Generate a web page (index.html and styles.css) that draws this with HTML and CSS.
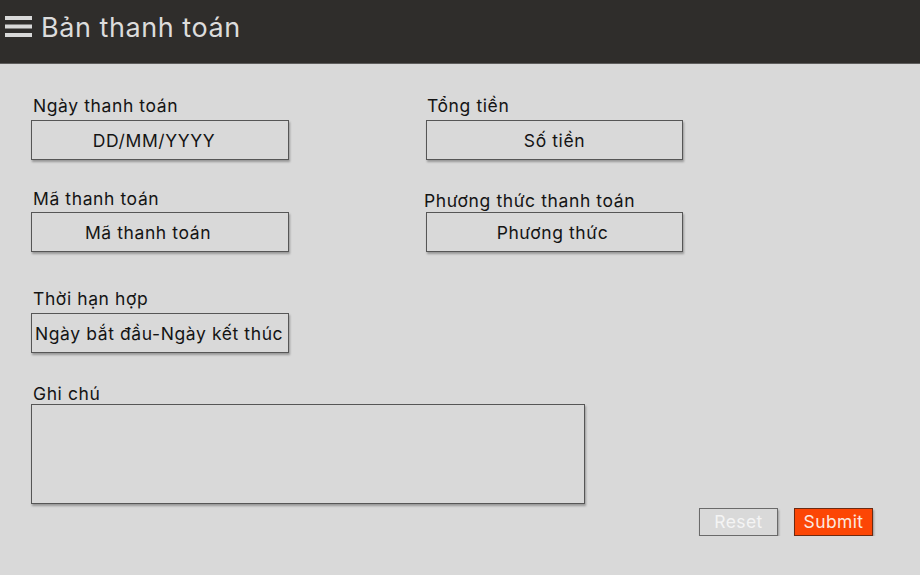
FILE: index.html
```html
<!DOCTYPE html>
<html lang="vi">
<head>
<meta charset="utf-8">
<title>Bản thanh toán</title>
<link rel="stylesheet" href="styles.css">
</head>
<body>
<header class="topbar">
  <svg class="menu-icon" width="28" height="22" viewBox="0 0 28 22" aria-hidden="true">
    <rect x="0" y="0" width="27" height="4" fill="#d9d9d9"/>
    <rect x="0" y="8.5" width="27" height="4" fill="#d9d9d9"/>
    <rect x="0" y="17" width="27" height="4" fill="#d9d9d9"/>
  </svg>
  <h1 class="title">Bản thanh toán</h1>
</header>
<main class="form">
  <div class="row row-1">
    <div class="field">
      <label class="label">Ngày thanh toán</label>
      <div class="box pad-r12">DD/MM/YYYY</div>
    </div>
    <div class="field col-2">
      <label class="label label-near">Tổng tiền</label>
      <div class="box">Số tiền</div>
    </div>
  </div>
  <div class="row row-2">
    <div class="field">
      <label class="label label-tight">Mã thanh toán</label>
      <div class="box pad-r24">Mã thanh toán</div>
    </div>
    <div class="field col-2">
      <label class="label label-tighter shift-l">Phương thức thanh toán</label>
      <div class="box pad-r4">Phương thức</div>
    </div>
  </div>
  <div class="row row-3">
    <div class="field">
      <label class="label">Thời hạn hợp</label>
      <div class="box box-fill">Ngày bắt đầu-Ngày kết thúc</div>
    </div>
  </div>
  <div class="row row-4">
    <div class="field">
      <label class="label label-none">Ghi chú</label>
      <div class="note"></div>
    </div>
  </div>
  <div class="actions">
    <button class="btn btn-reset">Reset</button>
    <button class="btn btn-submit">Submit</button>
  </div>
</main>
</body>
</html>
```
FILE: styles.css
```css
* { box-sizing: border-box; }
html, body {
  margin: 0;
  padding: 0;
  background: #d9d9d9;
  font-family: Inter, "Noto Sans", sans-serif;
  color: #141414;
}
.topbar {
  height: 64px;
  background: #2f2d2b;
  border-bottom: 1px solid #5e5d5c;
  display: flex;
  align-items: flex-start;
  padding-left: 5px;
}
.menu-icon {
  display: block;
  margin-top: 16px;
}
.title {
  margin: 12px 0 0 8px;
  font-size: 27px;
  font-weight: 400;
  letter-spacing: 0.55px;
  color: #dcdcdc;
  line-height: 32px;
}
.form {
  padding: 32px 31px 0 31px;
}
.row {
  display: flex;
  align-items: flex-end;
}
.row-2 { margin-top: 29px; }
.row-3 { margin-top: 37px; }
.row-4 { margin-top: 31px; }
.field {
  display: flex;
  flex-direction: column;
  width: 258px;
}
.col-2 {
  margin-left: 137px;
  width: 257px;
}
.label {
  display: block;
  font-size: 17.5px;
  letter-spacing: 0.6px;
  line-height: 20px;
  margin: 0 0 4px 2px;
  white-space: nowrap;
}
.label-near { margin-left: 1px; }
.label-tight { margin-bottom: 3px; }
.label-tighter { margin-bottom: 1px; }
.label-none { margin-bottom: 0; }
.shift-l { margin-left: -2px; }
.box {
  height: 40px;
  border: 1px solid #565656;
  box-shadow: 1px 2px 2px rgba(0,0,0,0.3);
  display: flex;
  align-items: center;
  justify-content: center;
  font-size: 17.5px;
  letter-spacing: 0.6px;
  white-space: nowrap;
  background: #d9d9d9;
}
.pad-r12 { padding-right: 12px; }
.pad-r24 { padding-right: 24px; }
.pad-r4 { padding-right: 4px; }
.box-fill {
  justify-content: flex-start;
  padding-left: 3px;
}
.note {
  width: 554px;
  height: 100px;
  border: 1px solid #565656;
  box-shadow: 1px 2px 2px rgba(0,0,0,0.3);
  background: #d9d9d9;
}
.actions {
  display: flex;
  justify-content: flex-end;
  gap: 16px;
  margin-top: 4px;
  padding-right: 16px;
}
.btn {
  height: 28px;
  width: 79px;
  font-family: Inter, "Noto Sans", sans-serif;
  font-size: 17.5px;
  letter-spacing: 0.4px;
  padding: 0;
  line-height: 26px;
  box-shadow: 1px 2px 2px rgba(0,0,0,0.3);
  cursor: pointer;
}
.btn-reset {
  background: #d9d9d9;
  color: #f4f4f4;
  border: 1px solid #6a6a6a;
}
.btn-submit {
  background: #fc4605;
  color: #fbe9e0;
  border: 1px solid #6b2a12;
}
```
